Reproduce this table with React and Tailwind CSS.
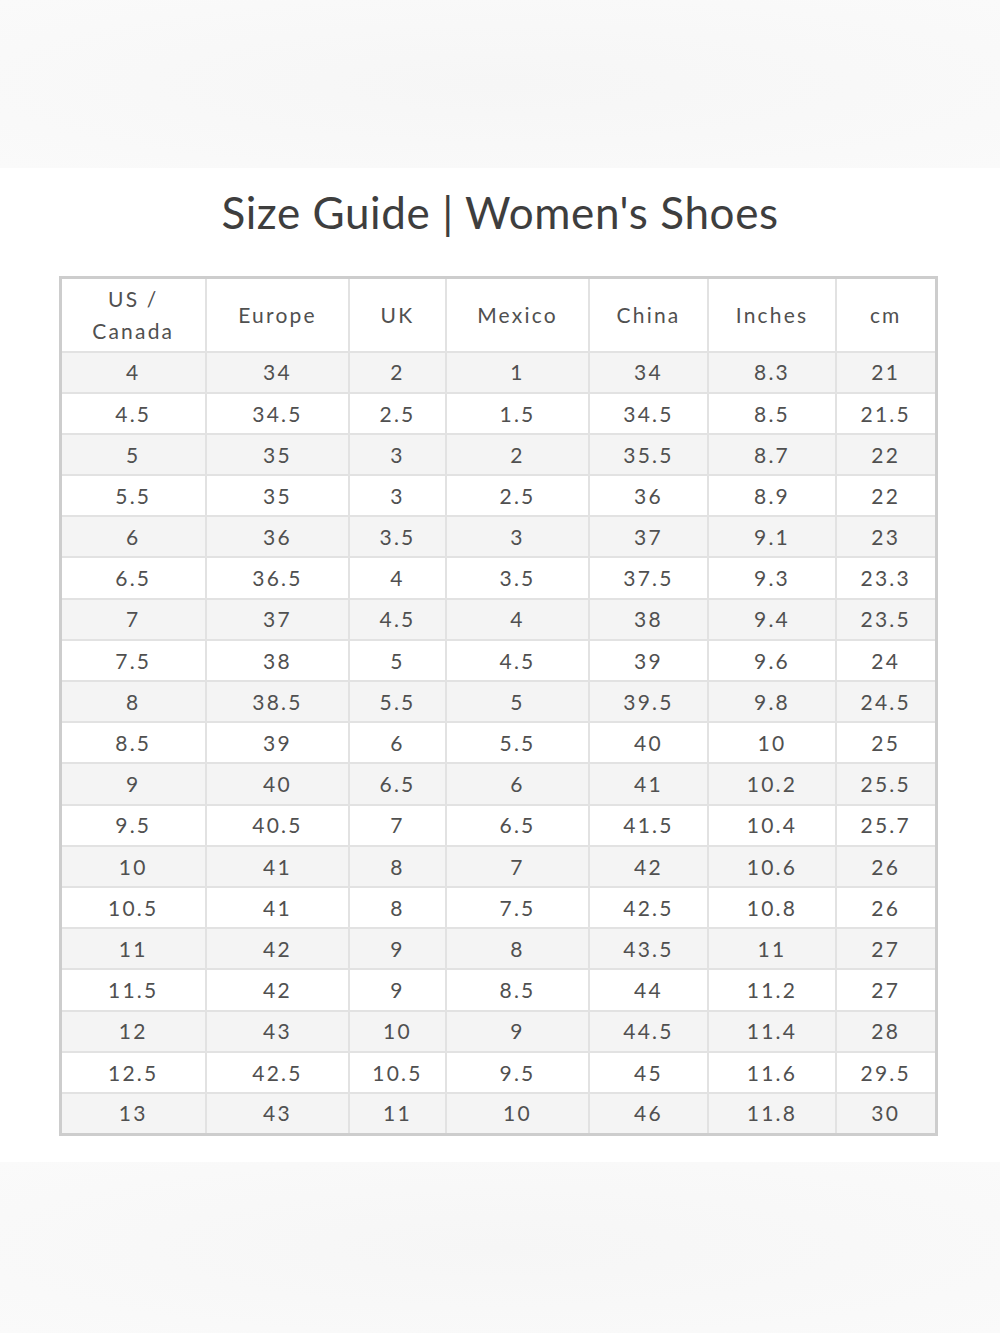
import React from "react";

const rows = [
  ["4", "34", "2", "1", "34", "8.3", "21"],
  ["4.5", "34.5", "2.5", "1.5", "34.5", "8.5", "21.5"],
  ["5", "35", "3", "2", "35.5", "8.7", "22"],
  ["5.5", "35", "3", "2.5", "36", "8.9", "22"],
  ["6", "36", "3.5", "3", "37", "9.1", "23"],
  ["6.5", "36.5", "4", "3.5", "37.5", "9.3", "23.3"],
  ["7", "37", "4.5", "4", "38", "9.4", "23.5"],
  ["7.5", "38", "5", "4.5", "39", "9.6", "24"],
  ["8", "38.5", "5.5", "5", "39.5", "9.8", "24.5"],
  ["8.5", "39", "6", "5.5", "40", "10", "25"],
  ["9", "40", "6.5", "6", "41", "10.2", "25.5"],
  ["9.5", "40.5", "7", "6.5", "41.5", "10.4", "25.7"],
  ["10", "41", "8", "7", "42", "10.6", "26"],
  ["10.5", "41", "8", "7.5", "42.5", "10.8", "26"],
  ["11", "42", "9", "8", "43.5", "11", "27"],
  ["11.5", "42", "9", "8.5", "44", "11.2", "27"],
  ["12", "43", "10", "9", "44.5", "11.4", "28"],
  ["12.5", "42.5", "10.5", "9.5", "45", "11.6", "29.5"],
  ["13", "43", "11", "10", "46", "11.8", "30"],
];

const widths = ["w-[146px]", "w-[143px]", "w-[97px]", "w-[143px]", "w-[119px]", "w-[128px]", "w-[100px]"];

export default function App() {
  return (
    <div className="w-[1000px] h-[1333px] flex flex-col font-['Lato',sans-serif] text-[#505050]">
      <div className="h-[168px] bg-[radial-gradient(ellipse_at_center,#f6f6f6,#fafafa)]" />
      <div className="h-[994px] bg-white flex flex-col items-center">
        <h1 className="mt-[20px] text-[44px] leading-[48px] text-[#3e3e3e] tracking-[0.6px]">
          Size Guide | Women's Shoes
        </h1>
        <table className="mt-[40px] mr-[4px] border-collapse border-[3px] border-[#cdcdcd] text-[21px] tracking-[2.2px] text-center">
          <thead>
            <tr className="h-[74px] bg-white">
              {["US / Canada", "Europe", "UK", "Mexico", "China", "Inches", "cm"].map((h, i) => (
                <th key={h} className={`${widths[i]} border-2 border-[#e2e2e2] font-normal leading-[32px] ${i === 0 ? "px-[26px]" : ""}`}>
                  {h}
                </th>
              ))}
            </tr>
          </thead>
          <tbody>
            {rows.map((r, ri) => (
              <tr key={ri} className={`h-[41.2px] ${ri % 2 === 0 ? "bg-[#f4f4f4]" : "bg-white"}`}>
                {r.map((c, ci) => (
                  <td key={ci} className="border-2 border-[#e2e2e2] p-0">
                    {c}
                  </td>
                ))}
              </tr>
            ))}
          </tbody>
        </table>
      </div>
      <div className="h-[171px] bg-[radial-gradient(ellipse_at_center,#f6f6f6,#fafafa)]" />
    </div>
  );
}
